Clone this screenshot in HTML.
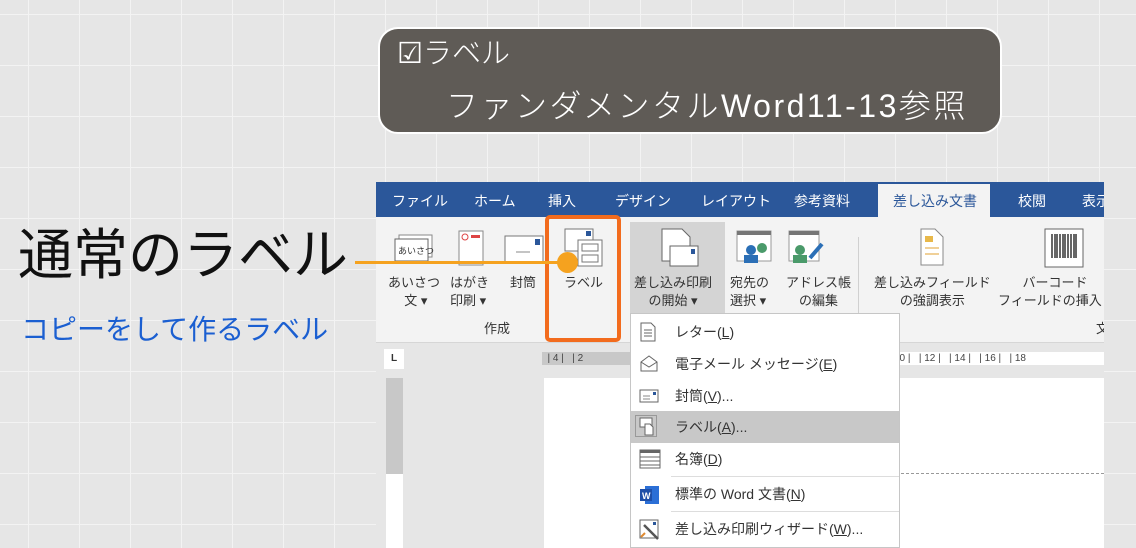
<!DOCTYPE html>
<html><head><meta charset="utf-8"><style>
*{margin:0;padding:0;box-sizing:border-box}
body{width:1136px;height:548px;overflow:hidden;position:relative;font-family:"Liberation Sans","Noto Sans CJK JP",sans-serif;
background-color:#e6e6e6;
background-image:linear-gradient(to right,#f3f3f3 1px,transparent 1px),linear-gradient(to bottom,#f3f3f3 1px,transparent 1px);
background-size:51px 51px;background-position:28px 14px}
.a{position:absolute;white-space:nowrap}
.jp{font-family:"Liberation Sans","Noto Sans CJK JP",sans-serif}
.t{color:#fff;font-size:14px;top:190px}
.rb{font-size:13px;color:#333;text-align:center;line-height:18px}
.mi{position:absolute;left:0;width:268px;height:32px;font-size:14px;color:#333}
.mi span{position:absolute;left:44px;top:6px}
.mi svg{position:absolute;left:8px;top:6px}
</style></head><body>
<!-- callout -->
<div class="a" style="left:378px;top:27px;width:624px;height:107px;background:#5f5b56;border:2px solid #fff;border-radius:20px"></div>
<div class="a jp" style="left:397px;top:37px;color:#fff;font-size:29px;line-height:34px;font-weight:300">☑ラベル</div>
<div class="a jp" style="left:446px;top:87px;color:#fff;font-size:32px;line-height:38px;letter-spacing:2.5px;font-weight:300">ファンダメンタルWord11-13参照</div>

<!-- left text -->
<div class="a jp" style="left:18px;top:222px;font-size:55px;color:#111;line-height:66px">通常のラベル</div>
<div class="a jp" style="left:21px;top:311px;font-size:28px;color:#1b5fd1;line-height:38px">コピーをして作るラベル</div>

<!-- word window -->
<div class="a" style="left:376px;top:182px;width:728px;height:366px;background:#e6e6e6;overflow:hidden">
 <div class="a" style="left:0;top:0;width:728px;height:35px;background:#2b579a"></div>
 <div class="a" style="left:502px;top:2px;width:112px;height:33px;background:#f3f3f3"></div>
 <div class="a t" style="left:16px;top:9px">ファイル</div>
 <div class="a t" style="left:98px;top:9px">ホーム</div>
 <div class="a t" style="left:172px;top:9px">挿入</div>
 <div class="a t" style="left:239px;top:9px">デザイン</div>
 <div class="a t" style="left:325px;top:9px">レイアウト</div>
 <div class="a t" style="left:418px;top:9px">参考資料</div>
 <div class="a t" style="left:517px;top:9px;color:#2b579a">差し込み文書</div>
 <div class="a t" style="left:642px;top:9px">校閲</div>
 <div class="a t" style="left:706px;top:9px">表示</div>
 <!-- ribbon body -->
 <div class="a" style="left:0;top:35px;width:728px;height:126px;background:#f3f3f3;border-bottom:1px solid #d6d6d6"></div>
 <div class="a" style="left:254px;top:40px;width:95px;height:103px;background:#d4d4d4"></div>
 <div class="a" style="left:482px;top:55px;width:1px;height:85px;background:#d0d0d0"></div>
 <!-- icons -->
 <svg class="a" style="left:18px;top:52px" width="40" height="30"><rect x="5" y="1" width="33" height="22" fill="#fff" stroke="#888"/><rect x="1" y="5" width="33" height="22" fill="#fff" stroke="#666"/><text x="4" y="20" font-size="9" fill="#333" font-family="Noto Sans CJK JP">あいさつ</text></svg>
 <svg class="a" style="left:82px;top:48px" width="26" height="36"><rect x="1" y="1" width="24" height="34" fill="#fff" stroke="#888"/><circle cx="7" cy="7" r="3" fill="none" stroke="#d44"/><rect x="13" y="5" width="9" height="3" fill="#d44"/></svg>
 <svg class="a" style="left:128px;top:53px" width="40" height="28"><rect x="1" y="1" width="38" height="26" fill="#fff" stroke="#777"/><rect x="31" y="4" width="5" height="6" fill="#2b579a"/><line x1="12" y1="17" x2="26" y2="17" stroke="#888"/></svg>
 <svg class="a" style="left:188px;top:46px" width="40" height="40"><rect x="1" y="1" width="28" height="22" fill="#fff" stroke="#777"/><rect x="22" y="3" width="5" height="5" fill="#2b579a"/><rect x="14" y="12" width="24" height="26" fill="#fff" stroke="#777"/><rect x="18" y="16" width="16" height="7" fill="none" stroke="#777"/><rect x="18" y="27" width="16" height="7" fill="none" stroke="#777"/></svg>
 <svg class="a" style="left:280px;top:46px" width="44" height="44"><path d="M6 1h20l8 8v24H6z" fill="#fff" stroke="#666"/><rect x="14" y="18" width="28" height="20" fill="#fff" stroke="#666"/><rect x="35" y="21" width="4" height="5" fill="#2b579a"/></svg>
 <svg class="a" style="left:360px;top:48px" width="36" height="36"><rect x="1" y="1" width="34" height="30" fill="#fff" stroke="#999"/><rect x="1" y="1" width="34" height="4" fill="#777"/><circle cx="15" cy="20" r="5" fill="#2b6fb6"/><circle cx="26" cy="18" r="5" fill="#4a9a6a"/><rect x="8" y="25" width="14" height="8" fill="#2b6fb6"/></svg>
 <svg class="a" style="left:412px;top:48px" width="36" height="36"><rect x="1" y="1" width="30" height="30" fill="#fff" stroke="#999"/><rect x="1" y="1" width="30" height="4" fill="#777"/><circle cx="12" cy="20" r="5" fill="#4a9a6a"/><rect x="5" y="25" width="14" height="8" fill="#4a9a6a"/><path d="M22 28l12-14" stroke="#2b6fb6" stroke-width="4"/></svg>
 <svg class="a" style="left:544px;top:46px" width="24" height="38"><path d="M1 1h14l8 8v28H1z" fill="#fff" stroke="#888"/><rect x="5" y="8" width="8" height="6" fill="#e8b84a"/><line x1="5" y1="20" x2="19" y2="20" stroke="#e0a030"/><line x1="5" y1="26" x2="19" y2="26" stroke="#e0a030"/></svg>
 <svg class="a" style="left:668px;top:46px" width="40" height="40"><rect x="1" y="1" width="38" height="38" fill="#fff" stroke="#666"/><path d="M8 6v24M11 6v24M13 6v24M16 6v24M19 6v24M21 6v24M24 6v24M27 6v24M30 6v24M32 6v24" stroke="#333" stroke-width="1.5"/></svg>
 <!-- labels -->
 <div class="a rb" style="left:12px;top:92px">あいさつ<br>&nbsp;文 ▾</div>
 <div class="a rb" style="left:74px;top:92px;text-align:left">はがき<br>印刷 ▾</div>
 <div class="a rb" style="left:134px;top:92px">封筒</div>
 <div class="a rb" style="left:188px;top:92px">ラベル</div>
 <div class="a rb" style="left:258px;top:92px">差し込み印刷<br>の開始 ▾</div>
 <div class="a rb" style="left:354px;top:92px;text-align:left">宛先の<br>選択 ▾</div>
 <div class="a rb" style="left:410px;top:92px">アドレス帳<br>の編集</div>
 <div class="a rb" style="left:498px;top:92px">差し込みフィールド<br>の強調表示</div>
 <div class="a rb" style="left:622px;top:92px">バーコード<br>フィールドの挿入 ▾</div>
 <div class="a rb" style="left:108px;top:138px">作成</div>
 <div class="a rb" style="left:720px;top:138px">文</div>
 <!-- rulers -->
 <div class="a" style="left:8px;top:167px;width:20px;height:20px;background:#fff;font-size:10px;font-weight:bold;text-align:center;line-height:20px;color:#333">L</div>
 <div class="a" style="left:166px;top:170px;width:90px;height:13px;background:#c8c8c8;font-size:10px;color:#444;line-height:13px">&nbsp;&nbsp;| 4 |&nbsp;&nbsp;&nbsp;| 2</div>
 <div class="a" style="left:518px;top:170px;width:210px;height:13px;background:#fff;font-size:10px;color:#444;line-height:13px">10 |&nbsp;&nbsp;&nbsp;| 12 |&nbsp;&nbsp;&nbsp;| 14 |&nbsp;&nbsp;&nbsp;| 16 |&nbsp;&nbsp;&nbsp;| 18</div>
 <div class="a" style="left:10px;top:196px;width:17px;height:96px;background:#c8c8c8"></div>
 <div class="a" style="left:10px;top:292px;width:17px;height:80px;background:#fff"></div>
 <div class="a" style="left:168px;top:196px;width:560px;height:180px;background:#fff"></div>
 <div class="a" style="left:520px;top:291px;width:208px;border-top:1px dashed #999"></div>
</div>

<!-- orange highlight -->
<div class="a" style="left:545px;top:215px;width:76px;height:127px;border:4px solid #f26b1d;border-radius:5px"></div>
<div class="a" style="left:355px;top:261px;width:212px;height:3px;background:#f5a21f"></div>
<div class="a" style="left:557px;top:252px;width:21px;height:21px;border-radius:50%;background:#f5a21f"></div>

<!-- dropdown -->
<div class="a" style="left:630px;top:313px;width:270px;height:235px;background:#fff;border:1px solid #c6c6c6">
 <div class="mi" style="top:2px"><svg width="18" height="20"><path d="M2 1h10l4 4v14H2z" fill="#fff" stroke="#666"/><path d="M5 8h8M5 11h8M5 14h8" stroke="#666"/></svg><span>レター(<u>L</u>)</span></div>
 <div class="mi" style="top:34px"><svg width="20" height="20"><path d="M2 8l8-6 8 6v9H2z" fill="#fff" stroke="#666"/><path d="M2 8l8 5 8-5" fill="none" stroke="#666"/></svg><span>電子メール メッセージ(<u>E</u>)</span></div>
 <div class="mi" style="top:66px"><svg width="20" height="20"><rect x="1" y="4" width="18" height="12" fill="#fff" stroke="#666"/><rect x="14" y="6" width="3" height="3" fill="#2b579a"/><path d="M4 10h7M4 13h7" stroke="#888"/></svg><span>封筒(<u>V</u>)...</span></div>
 <div class="mi" style="top:97px;background:#c8c8c8"><svg width="22" height="22" style="left:4px;top:4px"><rect x="0.5" y="0.5" width="21" height="21" fill="none" stroke="#999"/><rect x="5" y="3" width="12" height="9" fill="#fff" stroke="#666"/><path d="M10 9h5l3 3v8h-8z" fill="#fff" stroke="#666"/></svg><span>ラベル(<u>A</u>)...</span></div>
 <div class="mi" style="top:129px"><svg width="22" height="20"><rect x="1" y="1" width="20" height="18" fill="#fff" stroke="#666"/><rect x="1" y="1" width="20" height="3" fill="#666"/><path d="M1 8h20M1 12h20M1 16h20" stroke="#666"/></svg><span>名簿(<u>D</u>)</span></div>
 <div class="a" style="left:40px;top:162px;width:228px;height:1px;background:#ddd"></div>
 <div class="mi" style="top:164px"><svg width="22" height="22"><rect x="6" y="2" width="14" height="18" fill="#2b6fd6"/><rect x="1" y="5" width="12" height="12" fill="#1e4fa8"/><text x="3" y="15" font-size="9" font-weight="bold" fill="#fff">W</text></svg><span>標準の Word 文書(<u>N</u>)</span></div>
 <div class="a" style="left:40px;top:197px;width:228px;height:1px;background:#ddd"></div>
 <div class="mi" style="top:199px"><svg width="22" height="22"><rect x="1" y="1" width="18" height="18" fill="#fff" stroke="#666"/><path d="M5 6l14 14" stroke="#555" stroke-width="2.5"/><path d="M2 18l4-4" stroke="#e08a30" stroke-width="2"/><rect x="14" y="3" width="3" height="3" fill="#2b579a"/></svg><span>差し込み印刷ウィザード(<u>W</u>)...</span></div>
</div>
</body></html>
